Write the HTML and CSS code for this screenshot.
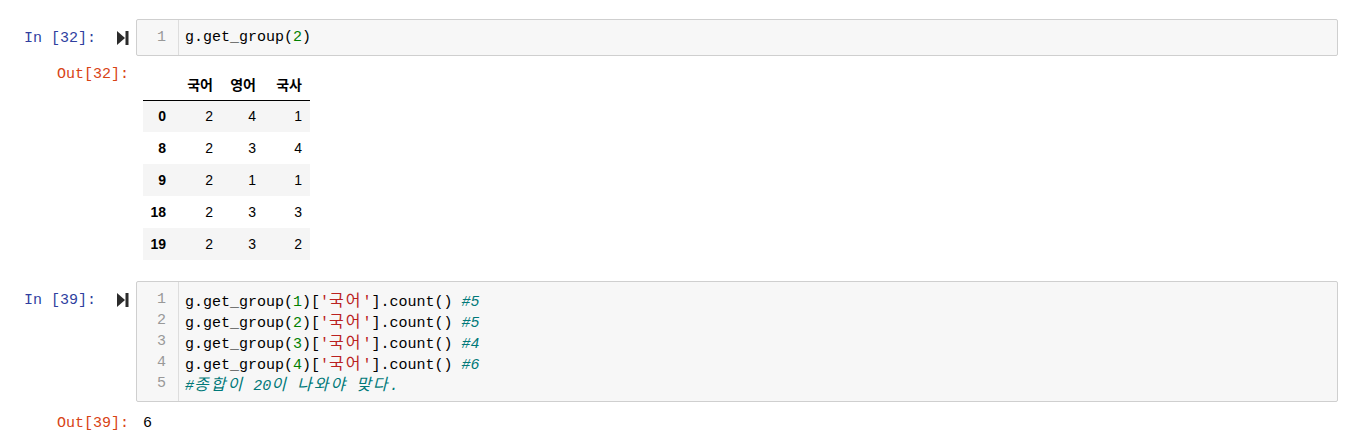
FILE: index.html
```html
<!DOCTYPE html>
<html lang="ko">
<head>
<meta charset="utf-8">
<title>Notebook</title>
<link rel="stylesheet" href="styles.css">
</head>
<body>
<div class="notebook">
  <div class="cell">
    <div class="input">
      <div class="in-prompt"><span class="prompt-text">In&nbsp;[32]:</span><svg class="run" width="12" height="14" viewBox="0 0 12 14"><polygon points="0,0 8,7 0,14" fill="#2b2b2b"/><rect x="8.5" y="0" width="3" height="14" fill="#2b2b2b"/></svg></div>
      <div class="editor">
        <div class="gutter"><div class="ln">1</div></div>
        <div class="code">
          <div class="line">g.get_group(<span class="num">2</span>)</div>
        </div>
      </div>
    </div>
    <div class="output">
      <div class="out-prompt">Out[32]:</div>
      <table class="df">
        <thead>
          <tr><th class="idx"></th><th class="c1">국어</th><th class="c2">영어</th><th class="c3">국사</th></tr>
        </thead>
        <tbody>
          <tr><th>0</th><td>2</td><td>4</td><td>1</td></tr>
          <tr><th>8</th><td>2</td><td>3</td><td>4</td></tr>
          <tr><th>9</th><td>2</td><td>1</td><td>1</td></tr>
          <tr><th>18</th><td>2</td><td>3</td><td>3</td></tr>
          <tr><th>19</th><td>2</td><td>3</td><td>2</td></tr>
        </tbody>
      </table>
    </div>
  </div>

  <div class="cell cell-second">
    <div class="input">
      <div class="in-prompt"><span class="prompt-text">In&nbsp;[39]:</span><svg class="run" width="12" height="14" viewBox="0 0 12 14"><polygon points="0,0 8,7 0,14" fill="#2b2b2b"/><rect x="8.5" y="0" width="3" height="14" fill="#2b2b2b"/></svg></div>
      <div class="editor">
        <div class="gutter"><div class="ln">1</div><div class="ln">2</div><div class="ln">3</div><div class="ln">4</div><div class="ln">5</div></div>
        <div class="code">
          <div class="line">g.get_group(<span class="num">1</span>)[<span class="str">'<span class="ko">국어</span>'</span>].count() <span class="cmt">#5</span></div>
          <div class="line">g.get_group(<span class="num">2</span>)[<span class="str">'<span class="ko">국어</span>'</span>].count() <span class="cmt">#5</span></div>
          <div class="line">g.get_group(<span class="num">3</span>)[<span class="str">'<span class="ko">국어</span>'</span>].count() <span class="cmt">#4</span></div>
          <div class="line">g.get_group(<span class="num">4</span>)[<span class="str">'<span class="ko">국어</span>'</span>].count() <span class="cmt">#6</span></div>
          <div class="line"><span class="cmt">#<span class="ko">종합이</span> 20<span class="ko">이</span> <span class="ko">나와야</span> <span class="ko">맞다</span>.</span></div>
        </div>
      </div>
    </div>
    <div class="output">
      <div class="out-prompt">Out[39]:</div>
      <div class="out-text">6</div>
    </div>
  </div>
</div>
</body>
</html>
```

FILE: styles.css
```css
html, body {
  margin: 0;
  padding: 0;
  background: #ffffff;
}

.notebook {
  padding: 19px 15px 0 0;
  font-family: "Liberation Mono", "DejaVu Sans Mono", monospace;
  font-size: 15px;
  color: #000;
}

.cell {
  display: flex;
  flex-direction: column;
}

.cell-second {
  margin-top: 21px;
}

.input {
  display: flex;
  align-items: flex-start;
}

.in-prompt {
  width: 136px;
  flex: none;
  display: flex;
  justify-content: flex-end;
  align-items: center;
  height: 38px;
  box-sizing: border-box;
  padding-right: 7px;
  color: #303f9f;
  line-height: 21px;
}

.prompt-text {
  margin-right: 21px;
}

.run {
  display: block;
}

.editor {
  flex: 1;
  display: flex;
  background: #f7f7f7;
  border: 1px solid #cfcfcf;
  border-radius: 2px;
  box-sizing: border-box;
}

.gutter {
  width: 41px;
  flex: none;
  border-right: 1px solid #dddddd;
  padding: 7px 0 7px;
  color: #999999;
  text-align: right;
  box-sizing: content-box;
}

.ln {
  line-height: 21px;
  height: 21px;
  padding-right: 12px;
}

.code {
  flex: 1;
  padding: 7px 0 7px 6px;
}

.line {
  line-height: 21px;
  height: 21px;
  white-space: pre;
}

.num {
  color: #008000;
}

.str {
  color: #ba2121;
}

.cmt {
  color: #007979;
  font-style: italic;
}

.ko {
  font-family: "Noto Sans CJK KR", sans-serif;
  font-size: 16px;
  letter-spacing: 2px;
  line-height: 21px;
}

.output {
  display: flex;
  align-items: flex-start;
  padding-top: 11px;
}

.out-prompt {
  width: 143px;
  flex: none;
  box-sizing: border-box;
  padding-right: 14px;
  text-align: right;
  color: #d84315;
  line-height: 21px;
  margin-top: -4px;
}

.cell-second .out-prompt {
  margin-top: 0;
}

.df {
  border-collapse: collapse;
  border-spacing: 0;
  font-family: "Liberation Sans", Arial, "Noto Sans CJK KR", sans-serif;
  font-size: 14px;
  color: #000;
}

.df th,
.df td {
  height: 32px;
  padding: 0 8px 0 0;
  text-align: right;
  vertical-align: middle;
  box-sizing: border-box;
}

.df thead th {
  font-family: "Noto Sans CJK KR", sans-serif;
  font-weight: bold;
  font-size: 14px;
  border-bottom: 1px solid #000;
}

.df .idx { width: 31px; }
.df .c1 { width: 47px; }
.df .c2 { width: 43px; }
.df .c3 { width: 46px; }

.df tbody th {
  font-weight: bold;
}

.df tbody tr:nth-child(odd) {
  background: #f5f5f5;
}

.out-text {
  line-height: 21px;
}
```
